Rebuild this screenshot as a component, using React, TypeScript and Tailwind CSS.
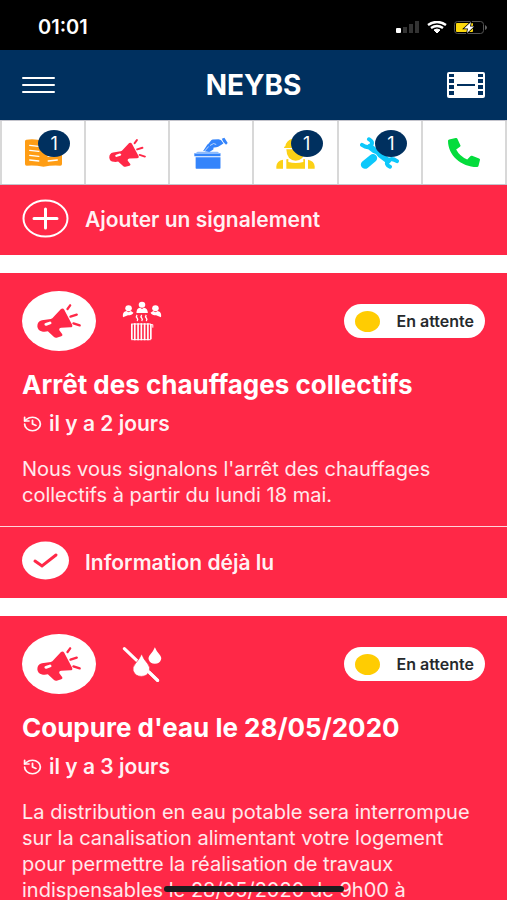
import { FaPhoneAlt } from 'react-icons/fa';
import { History } from 'lucide-react';

import type { FC, ReactNode } from 'react';

type IconProps = {
    className?: string;
};

const MegaphoneIcon: FC<IconProps> = ({ className }) => (
    <svg
        className={className}
        viewBox="110 372 134 102"
        preserveAspectRatio="none"
        fill="currentColor"
        aria-hidden="true"
    >
        <path
            fillRule="evenodd"
            d="M183 387q6-4 10 2l24 45q3 8-6 8l-27 1q-8 1-6 8l9 12q2 5-3 6l-14 4q-5 1-9-3l-18-16q-7 2-15 1-16-1-17-16 0-15 14-18l27-4q5-1 9-7zM136 429q-5 2-3 6 2 3 6 2l12-4q4-2 3-5-2-4-6-3z"
        />
        <g stroke="currentColor" strokeWidth="7" strokeLinecap="round">
            <path d="M203 387l8-11M212 410l19-6M221 430l19 6" />
        </g>
    </svg>
);

const NewsIcon: FC = () => (
    <svg className="w-[37px] h-7" viewBox="0 0 110 84" preserveAspectRatio="none" aria-hidden="true">
        <path
            fill="#ff9d14"
            d="M4 2q25-4 51 4 25-8 51-4 4 1 4 5v68q0 5-5 5-25-2-50 3-25-5-50-3-5 0-5-5V7q0-4 4-5z"
        />
        <path
            d="M14 19l27 3M14 34l27 3M14 49l27 3M14 63l27 3M69 22l27-3M69 37l27-3M69 52l27-3M69 66l27-3"
            stroke="#fff"
            strokeWidth="4"
            strokeLinecap="round"
        />
    </svg>
);

const VoteIcon: FC = () => (
    <svg className="w-[34px] h-8" viewBox="582 64 104 98" preserveAspectRatio="none" aria-hidden="true">
        <path fill="#3484fb" d="M587 126h76v33q0 2-2 2h-72q-2 0-2-2zM583 114h80v9h-80z" />
        <path fill="#8dbbfd" d="M593 109h61l9 7h-80z" />
        <path fill="#3484fb" d="M610 107l13-20 20 1-2 14-12 8z" />
        <path
            fill="#3484fb"
            d="M621 91l12-15q2-3 6-4l18-1q9 1 12 8l3 5-16 10q-8 3-15 2l-10 7-7-2 8-11z"
        />
        <path fill="#3484fb" d="M667 69l8-3 10 16-5 6q-9-6-13-19z" />
        <path d="M631 90l11-6 8 3M612 110l15-17" stroke="#fff" strokeWidth="2" fill="none" />
    </svg>
);

const WorkerIcon: FC = () => (
    <svg className="w-[39px] h-8" viewBox="69 64 117 96" preserveAspectRatio="none" fill="#fcd116" aria-hidden="true">
        <path d="M93 97q0-4 4-5 2-17 20-23v18h4V66h14v21h4V69q17 6 20 23 4 1 4 5z" />
        <path d="M100 101h56q-1 33-28 34-27-1-28-34z" />
        <path d="M70 159v-7q1-17 20-20v27zM100 131l6-1v9q22 6 45 0v-9l5 1v28h-56zM165 132q19 4 20 20v7h-20z" />
    </svg>
);

const ToolsIcon: FC = () => (
    <svg className="w-[39px] h-8" viewBox="320 64 117 97" preserveAspectRatio="none" fill="none" aria-hidden="true">
        <g stroke="#0cc8fb" strokeLinecap="round" strokeLinejoin="round">
            <path d="M350 94l54 42" strokeWidth="18" />
            <path d="M347 71q13 7 7 17-9 13-28 0M410 154q-14-7-7-17 10-12 28 0" strokeWidth="12" />
            <path d="M366 121l44-35" strokeWidth="8" />
            <path d="M409 87l16-14" strokeWidth="14" />
            <path d="M335 148l24-20" stroke="#fff" strokeWidth="30" />
            <path d="M335 148l24-20" strokeWidth="25" />
        </g>
    </svg>
);

const FilmIcon: FC = () => (
    <svg className="w-[38px] h-[26px]" viewBox="0 0 38 26" aria-hidden="true">
        <rect width="38" height="26" rx="2" fill="#fff" />
        <g fill="#00305f">
            <path d="M2 2h5v3H2zM2 7h5v4H2zM2 13h5v4H2zM2 19h5v4H2zM31 2h5v3h-5zM31 7h5v4h-5zM31 13h5v4h-5zM31 19h5v4h-5z" />
            <path d="M10 12h18v2H10z" />
        </g>
    </svg>
);

const HeatingIcon: FC = () => (
    <svg className="w-10 h-10" viewBox="366 361 122 120" preserveAspectRatio="none" fill="#fff" aria-hidden="true">
        <ellipse cx="427" cy="372" rx="10" ry="9" />
        <ellipse cx="386" cy="383" rx="10" ry="9" />
        <ellipse cx="468" cy="383" rx="10" ry="9" />
        <path d="M410 397q0-15 11-16l6 4 6-4q11 1 12 16zM369 410q-3-16 10-19l7 4 7-4 8 5q-5 8-17 8zM485 410q3-16-10-19l-7 4-7-4-8 5q5 8 17 8z" />
        <g fill="none" stroke="#fff">
            <path
                d="M412 403q-4 5 0 9t0 9M426 403q-4 5 0 9t0 9M440 403q-4 5 0 9t0 9"
                strokeWidth="4"
            />
            <path
                d="M396 430v46M405 428v51M415 428v51M425 428v51M435 428v51M445 428v51M454 430v46"
                strokeWidth="5"
            />
            <path d="M394 430h60M394 477h60M454 432h6v9" strokeWidth="3" />
        </g>
    </svg>
);

const NoWaterIcon: FC = () => (
    <svg className="w-10 h-9" viewBox="369 388 118 109" preserveAspectRatio="none" aria-hidden="true">
        <path d="M376 396l98 96" stroke="#fff" strokeWidth="9" strokeLinecap="round" />
        <path
            fill="#fff"
            stroke="#ff2847"
            strokeWidth="2"
            d="M427 412q5 15 18 30 8 11 5 21-6 17-24 17t-24-17q-3-10 6-21 13-15 19-30z"
        />
        <path fill="#fff" d="M466 392q4 11 13 21 8 9 5 17-4 12-18 12t-18-12q-3-8 5-17 9-10 13-21z" />
        <path d="M448 466l26 26" stroke="#fff" strokeWidth="9" strokeLinecap="round" />
    </svg>
);

const StatusBar: FC = () => (
    <div className="flex shrink-0 items-center justify-between h-[50px] pl-[38px] pr-5 pt-1 bg-black text-white">
        <span className="text-[20px] leading-6 font-semibold">01:01</span>
        <div className="flex items-center gap-[7px]">
            <svg className="w-6 h-3" viewBox="0 0 24 12" aria-hidden="true">
                <rect y="7" width="5" height="5" rx="1" fill="#fff" />
                <path d="M7 6h4v6H7zM13 3h4v9h-4zM19 0h4v12h-4z" fill="#333" />
            </svg>
            <svg className="w-5 h-3" viewBox="0 0 20 12" fill="none" stroke="#fff" aria-hidden="true">
                <path d="M1 4q9-6 18 0M4 7q6-4 12 0" strokeWidth="2.500" />
                <path d="M7 9q3-2 6 0l-3 3z" fill="#fff" />
            </svg>
            <svg className="w-[33px] h-[13px]" viewBox="0 0 33 13" aria-hidden="true">
                <rect x=".5" y=".5" width="29" height="12" rx="3" fill="none" stroke="#555" />
                <path d="M31 4q2 1 2 2.500t-2 2.500z" fill="#666" />
                <rect x="2" y="2" width="17" height="9" rx="1" fill="#fcd80c" />
                <path
                    d="M17 1l-7 6.500h4l-1 4.500 7-6.500h-4z"
                    fill="#fff"
                    stroke="#000"
                    strokeWidth="1.500"
                    paintOrder="stroke"
                />
            </svg>
        </div>
    </div>
);

const tabs: { label: string; icon: ReactNode; count?: number }[] = [
    { label: 'Actualités', icon: <NewsIcon />, count: 1 },
    {
        label: 'Signalements',
        icon: <MegaphoneIcon className="w-[37px] h-7 text-[#ff2847]" />
    },
    { label: 'Votes', icon: <VoteIcon /> },
    { label: 'Gardien', icon: <WorkerIcon />, count: 1 },
    { label: 'Travaux', icon: <ToolsIcon />, count: 1 },
    {
        label: 'Contacts',
        icon: (
            <FaPhoneAlt
                className="w-8 h-[29px] text-[#04dc3c]"
                preserveAspectRatio="none"
            />
        )
    }
];

const TabBar: FC = () => (
    <nav className="grid shrink-0 grid-cols-6 gap-[2px] h-[65px] px-[2px] border-y border-[#c4c4cc] bg-[#d8d8d8]">
        {tabs.map(({ label, icon, count }) => (
            <button
                key={label}
                type="button"
                aria-label={label}
                className="relative flex items-center justify-center bg-white"
            >
                {icon}
                {count ? (
                    <span className="absolute top-[9px] right-3.5 flex items-center justify-center w-8 h-[27px] rounded-[50%] bg-[#00305f] text-lg text-white">
                        {count}
                    </span>
                ) : null}
            </button>
        ))}
    </nav>
);

type ReportCardProps = {
    title: string;
    date: string;
    icon: ReactNode;
    children: ReactNode;
    isRead?: boolean;
};

const ReportCard: FC<ReportCardProps> = ({
    title,
    date,
    icon,
    children,
    isRead
}) => (
    <article className="bg-[#ff2847] text-white">
        <div className="px-[22px] pt-[18px] pb-[18px]">
            <div className="flex items-center">
                <div className="flex items-center justify-center w-[74px] h-[60px] rounded-[50%] bg-white">
                    <MegaphoneIcon className="w-11 h-[34px] text-[#ff2847]" />
                </div>
                <div className="ml-[26px]">{icon}</div>
                <div className="flex items-center justify-between w-[141px] h-[34px] ml-auto px-[11px] rounded-full bg-white">
                    <span className="w-[25px] h-[21px] rounded-[50%] bg-[#ffcc02]" />
                    <span className="text-[16px] leading-5 font-semibold text-[#26292c]">
                        En attente
                    </span>
                </div>
            </div>
            <h2 className="mt-5 text-[26px] leading-7 font-bold whitespace-nowrap">
                {title}
            </h2>
            <p className="flex items-center gap-1.5 mt-[13px] text-[21px] leading-6 font-semibold text-white/95">
                <History className="w-[21px] h-[18px]" preserveAspectRatio="none" />
                {date}
            </p>
            <p className="mt-5 text-[20px] leading-[26px] text-white/90">
                {children}
            </p>
        </div>
        {isRead ? (
            <div className="flex items-center h-[72px] gap-4 px-[22px] pb-1 border-t border-white/80">
                <svg className="w-[47px] h-[39px]" viewBox="0 0 47 39" aria-hidden="true">
                    <ellipse cx="23.500" cy="19.500" rx="23.500" ry="19" fill="#fff" />
                    <path
                        d="M13 20l7 5 14-11"
                        fill="none"
                        stroke="#ff2847"
                        strokeWidth="3"
                        strokeLinecap="round"
                    />
                </svg>
                <span className="pt-1 text-[21px] leading-6 font-semibold text-white/95">
                    Information déjà lu
                </span>
            </div>
        ) : null}
    </article>
);

const App: FC = () => (
    <div className="flex flex-col h-screen overflow-hidden bg-white font-[Inter,'Liberation_Sans',sans-serif] [font-optical-sizing:none]">
        <StatusBar />
        <header className="grid shrink-0 grid-cols-3 items-center h-[70px] px-[22px] bg-[#00305f] text-white">
            <button type="button" aria-label="Menu" className="w-[33px]">
                <svg className="w-[33px] h-[18px]" viewBox="0 0 33 18" aria-hidden="true">
                    <path
                        d="M1 2h31M1 9h31M1 16h31"
                        stroke="#fff"
                        strokeWidth="2"
                        strokeLinecap="round"
                    />
                </svg>
            </button>
            <h1 className="text-center text-[28px] font-bold">NEYBS</h1>
            <button type="button" aria-label="Vidéos" className="justify-self-end">
                <FilmIcon />
            </button>
        </header>
        <TabBar />
        <main className="flex flex-col flex-1 gap-[18px] min-h-0 overflow-y-auto [scrollbar-width:none]">
            <button
                type="button"
                className="flex shrink-0 items-center w-full h-[70px] gap-4 px-[22px] pb-1 bg-[#ff2847] text-white"
            >
                <svg
                    className="w-[47px] h-[39px]"
                    viewBox="0 0 47 39"
                    fill="none"
                    stroke="#fff"
                    strokeWidth="2"
                    aria-hidden="true"
                >
                    <ellipse cx="23.500" cy="19.500" rx="22" ry="18" />
                    <path d="M12 19.500h23M23.500 10v19" strokeWidth="3" strokeLinecap="round" />
                </svg>
                <span className="pt-1 text-[21px] leading-6 font-semibold text-white/95">
                    Ajouter un signalement
                </span>
            </button>
            <ReportCard
                title="Arrêt des chauffages collectifs"
                date="il y a 2 jours"
                icon={<HeatingIcon />}
                isRead
            >
                Nous vous signalons l'arrêt des chauffages collectifs à partir
                du lundi 18 mai.
            </ReportCard>
            <ReportCard
                title="Coupure d'eau le 28/05/2020"
                date="il y a 3 jours"
                icon={<NoWaterIcon />}
            >
                La distribution en eau potable sera interrompue sur la
                canalisation alimentant votre logement pour permettre la
                réalisation de travaux indispensables le 28/05/2020 de 9h00 à
            </ReportCard>
        </main>
        <div className="fixed bottom-2 left-1/2 w-[180px] h-1.5 -translate-x-1/2 rounded-full bg-[#1c1c1e]" />
    </div>
);

export default App;
